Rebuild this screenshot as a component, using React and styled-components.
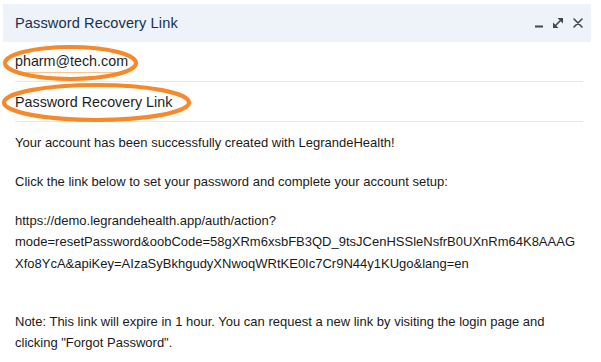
import React from 'react';
import styled, { createGlobalStyle } from 'styled-components';

const GlobalStyle = createGlobalStyle`
  html, body {
    margin: 0;
    padding: 0;
    background: #ffffff;
  }
  body {
    font-family: "Liberation Sans", Arial, sans-serif;
  }
`;

const Page = styled('div')`
  position: relative;
  width: 601px;
  height: 362px;
  overflow: hidden;
  padding: 4px 0 0 3px;
  box-sizing: border-box;
`;

const Panel = styled('div')`
  width: 588px;
`;

const Header = styled('div')`
  height: 37.5px;
  background: #eef3fa;
  display: flex;
  align-items: center;
  justify-content: space-between;
  padding: 0 8px 0 12px;
`;

const Title = styled('h3')`
  margin: 0;
  font-family: "Liberation Sans", Arial, sans-serif;
  font-weight: 400;
  font-size: 14.6px;
  color: #17304f;
  letter-spacing: 0.1px;
`;

const Controls = styled('div')`
  display: flex;
  align-items: center;
  gap: 10px;
  color: #454545;
`;

const IconButton = styled('button')`
  border: 0;
  padding: 0;
  background: none;
  display: flex;
  color: inherit;
  cursor: pointer;
`;

const Body = styled('div')`
  padding: 0 8px 0 12px;
`;

const FieldRow = styled('div')`
  height: ${(props) => props.height}px;
  display: flex;
  align-items: center;
  border-bottom: 1px solid #e6e6e6;
  font-size: 14.3px;
  color: #1e1e1e;
`;

const Value = styled('span')`
  display: inline-block;
  line-height: 16px;
  border-bottom: ${(props) => (props.underlined ? '1px solid #f9c88c' : '0')};
  padding-bottom: ${(props) => (props.underlined ? '3px' : '0')};
  margin-top: ${(props) => (props.underlined ? '4px' : '0')};
`;

const Message = styled('div')`
  padding-top: 9.5px;
  font-size: 13px;
  color: #1a1a1a;
`;

const Paragraph = styled('p')`
  margin: 0 0 ${(props) => props.gap || 0}px 0;
  line-height: 21.5px;
`;

const Line = styled('span')`
  display: block;
  white-space: nowrap;
`;

const Annotation = styled('svg')`
  position: absolute;
  top: 0;
  left: 0;
  pointer-events: none;
`;

const MinimizeIcon = () => (
  <svg width="8" height="10" viewBox="0 0 8 10">
    <rect x="0" y="7.5" width="8" height="2" fill="currentColor" />
  </svg>
);

const ExpandIcon = () => (
  <svg width="10" height="10" viewBox="0 0 10 10">
    <line x1="2" y1="8" x2="8" y2="2" stroke="currentColor" strokeWidth="1.6" />
    <polygon points="4.5,0 10,0 10,5.5" fill="currentColor" />
    <polygon points="0,4.5 0,10 5.5,10" fill="currentColor" />
  </svg>
);

const CloseIcon = () => (
  <svg width="10" height="10" viewBox="0 0 10 10">
    <path d="M1 1 L9 9 M9 1 L1 9" stroke="currentColor" strokeWidth="1.6" strokeLinecap="round" />
  </svg>
);

const App = () => {
  return (
    <Page>
      <GlobalStyle />
      <Panel>
        <Header>
          <Title>Password Recovery Link</Title>
          <Controls>
            <IconButton aria-label="minimize"><MinimizeIcon /></IconButton>
            <IconButton aria-label="expand"><ExpandIcon /></IconButton>
            <IconButton aria-label="close"><CloseIcon /></IconButton>
          </Controls>
        </Header>
        <Body>
          <FieldRow height={39.5}>
            <Value underlined>pharm@tech.com</Value>
          </FieldRow>
          <FieldRow height={39}>
            <Value>Password Recovery Link</Value>
          </FieldRow>
          <Message>
            <Paragraph gap={17.5}>Your account has been successfully created with LegrandeHealth!</Paragraph>
            <Paragraph gap={17.5}>Click the link below to set your password and complete your account setup:</Paragraph>
            <Paragraph gap={36.5}>
              <Line>https://demo.legrandehealth.app/auth/action?</Line>
              <Line>mode=resetPassword&amp;oobCode=58gXRm6xsbFB3QD_9tsJCenHSSleNsfrB0UXnRm64K8AAAG</Line>
              <Line>Xfo8YcA&amp;apiKey=AIzaSyBkhgudyXNwoqWRtKE0Ic7Cr9N44y1KUgo&amp;lang=en</Line>
            </Paragraph>
            <Paragraph>
              Note: This link will expire in 1 hour. You can request a new link by visiting the login page and
              <br />
              clicking "Forgot Password".
            </Paragraph>
          </Message>
        </Body>
      </Panel>
      <Annotation width="601" height="362" viewBox="0 0 601 362">
        <ellipse cx="70.5" cy="63" rx="65.5" ry="16" fill="none" stroke="#f7892b" strokeWidth="4.2" />
        <ellipse cx="96.5" cy="102.5" rx="92.5" ry="17.5" fill="none" stroke="#f7892b" strokeWidth="4.2" />
      </Annotation>
    </Page>
  );
};

export default App;
